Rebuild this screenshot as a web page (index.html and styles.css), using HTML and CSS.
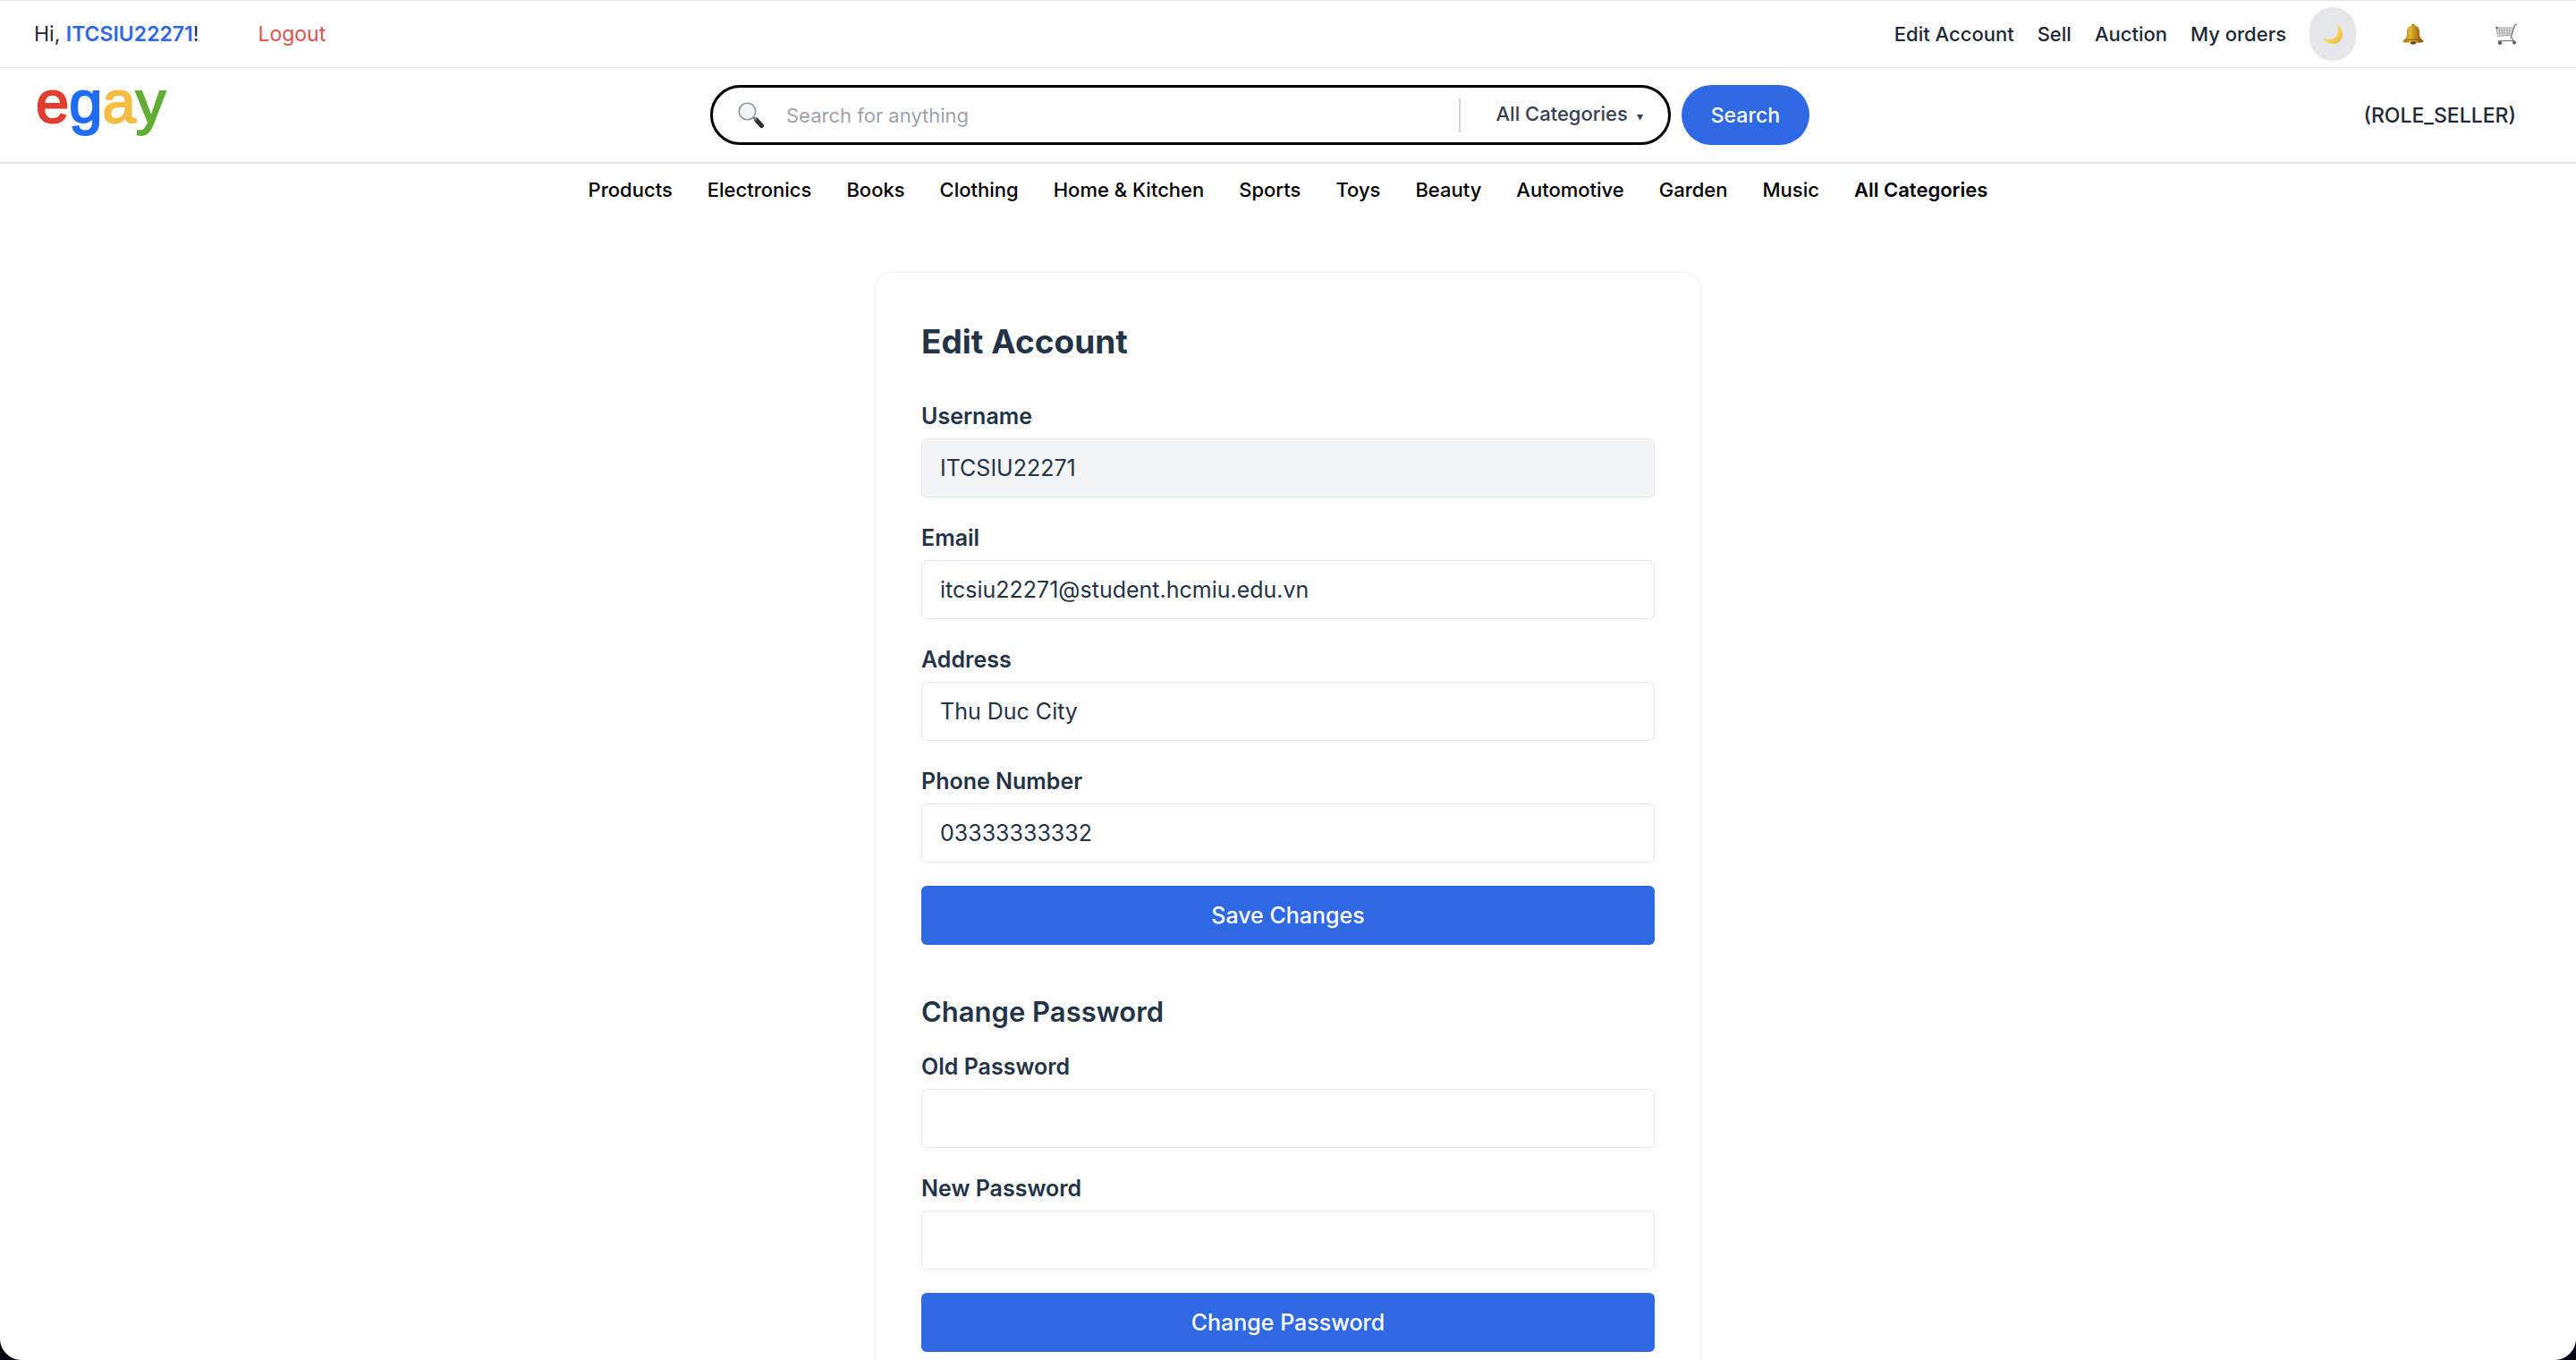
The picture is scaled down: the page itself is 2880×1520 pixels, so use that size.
FILE: index.html
```html
<!DOCTYPE html>
<html lang="en">
<head>
<meta charset="utf-8">
<title>Edit Account</title>
<link rel="stylesheet" href="styles.css">
</head>
<body>
<header>
  <div class="topbar">
    <div class="greeting">
      <span>Hi, <strong class="user">ITCSIU22271</strong>!</span>
      <button class="logout" type="button">Logout</button>
    </div>
    <nav class="account-links" aria-label="Account">
      <a href="#account">Edit Account</a>
      <a href="#sell">Sell</a>
      <a href="#auction">Auction</a>
      <a href="#orders">My orders</a>
      <button class="theme" type="button" aria-label="Toggle dark mode">
        <svg class="icon" viewBox="0 0 24 24" aria-hidden="true">
          <defs><linearGradient id="moon" x1="0" y1="0" x2="1" y2="1"><stop offset="0" stop-color="#fbe58f"/><stop offset=".6" stop-color="#f8d154"/><stop offset="1" stop-color="#e3b23c"/></linearGradient></defs>
          <path d="M16 1C25 6 25 17 18 21.500C12 25 4 22 1 16.500C6 19 12 18.500 15.500 15C19 11 19 5 16 1Z" fill="url(#moon)"/>
        </svg>
      </button>
      <button class="plain bell" type="button" aria-label="Notifications">
        <svg class="icon" viewBox="0 0 24 24" aria-hidden="true">
          <defs><linearGradient id="bell" x1="0" x2="1"><stop offset="0" stop-color="#a87410"/><stop offset=".35" stop-color="#e3b836"/><stop offset=".65" stop-color="#b98316"/><stop offset="1" stop-color="#7d520b"/></linearGradient></defs>
          <circle cx="12" cy="2.600" r="1.900" fill="#a06d12"/>
          <path d="M12 2.500C16.500 2.500 19 5 19 9.500C19 14.500 19.500 17 23.500 19.500Q23.500 21.500 20 21.800H4Q.5 21.500 .5 19.500C4.500 17 5 14.500 5 9.500C5 5 7.500 2.500 12 2.500Z" fill="url(#bell)"/>
          <path d="M3.500 19Q12 17 20.500 19" fill="none" stroke="#80540c"/>
          <ellipse cx="12" cy="22" rx="3" ry="1.700" fill="#70480a"/>
        </svg>
      </button>
      <button class="plain cart" type="button" aria-label="Cart">
        <svg class="icon" viewBox="0 0 24 24" aria-hidden="true" fill="none" stroke="#a3a5a8">
          <path d="M1 5H20L18 13L2.500 14.500Z" fill="#eeeff0"/>
          <path d="M4 5L5 14M7 5L8 14M10 5V14M13 5V13.500M16 5L15 13.500M1.500 8H19M2 11H18.500"/>
          <path d="M23.500 1L21.500 2L17.500 15Q17 16 18.500 17L20 19.500L3 20" stroke="#77797c" stroke-width="1.300"/>
          <circle cx="5" cy="22" r="1.600" fill="#55575a" stroke="#55575a"/><circle cx="21" cy="21.500" r="1.600" fill="#55575a" stroke="#55575a"/>
          <circle cx="1.500" cy="5" r=".8" fill="#40566e" stroke="#40566e"/>
        </svg>
      </button>
    </nav>
  </div>
  <div class="mainbar">
    <a class="logo" href="#home" aria-label="egay"><span class="red">e</span><span class="blue">g</span><span class="gold">a</span><span class="green">y</span></a>
    <form class="search" role="search">
      <div class="searchbox">
        <svg class="glass" viewBox="0 0 30 30" aria-hidden="true">
          <path d="M20.500 20L26.500 26.500" stroke="#2b2d30" stroke-width="5" stroke-linecap="round"/>
          <path d="M17 17L20.500 20.500" stroke="#777b80" stroke-width="2.500"/>
          <circle cx="10.500" cy="10.500" r="9.300" fill="#f3f4f5" stroke="#8c949c" stroke-width="1.600"/>
        </svg>
        <input class="query" type="search" placeholder="Search for anything" aria-label="Search for anything">
        <button class="category" type="button">All Categories <span class="caret">▾</span></button>
      </div>
      <button class="go" type="submit">Search</button>
    </form>
    <span class="role">(ROLE_SELLER)</span>
  </div>
</header>
<nav class="categories" aria-label="Categories">
  <a href="#products">Products</a>
  <a href="#electronics">Electronics</a>
  <a href="#books">Books</a>
  <a href="#clothing">Clothing</a>
  <a href="#home-kitchen">Home &amp; Kitchen</a>
  <a href="#sports">Sports</a>
  <a href="#toys">Toys</a>
  <a href="#beauty">Beauty</a>
  <a href="#automotive">Automotive</a>
  <a href="#garden">Garden</a>
  <a href="#music">Music</a>
  <a class="all" href="#all">All Categories</a>
</nav>
<main class="card">
  <h1>Edit Account</h1>
  <form class="fields">
    <div class="field"><label for="username">Username</label><input id="username" type="text" value="ITCSIU22271" disabled></div>
    <div class="field"><label for="email">Email</label><input id="email" type="email" value="itcsiu22271@student.hcmiu.edu.vn"></div>
    <div class="field"><label for="address">Address</label><input id="address" type="text" value="Thu Duc City"></div>
    <div class="field"><label for="phone">Phone Number</label><input id="phone" type="tel" value="03333333332"></div>
    <button class="primary" type="submit">Save Changes</button>
  </form>
  <h2>Change Password</h2>
  <form class="fields">
    <div class="field"><label for="old">Old Password</label><input id="old" type="password"></div>
    <div class="field"><label for="new">New Password</label><input id="new" type="password"></div>
    <button class="primary" type="submit">Change Password</button>
  </form>
</main>
<div class="corners" aria-hidden="true"></div>
</body>
</html>
```
FILE: styles.css
```css
*, *::before, *::after { box-sizing: border-box; }
html { background: #fefefe; scrollbar-width: none; }
body {
  margin: 0;
  font-family: Inter, "Liberation Sans", sans-serif;
  font-size: 22px;
  line-height: 32px;
  color: #1f2937;
}
a { color: inherit; text-decoration: none; }
button, input { font: inherit; color: inherit; margin: 0; }
button { border: 0; background: none; padding: 0; cursor: pointer; }

.topbar {
  display: flex;
  align-items: center;
  justify-content: space-between;
  height: 76px;
  padding: 0 66px 0 38px;
  border-top: 1px solid #e5e7eb;
  border-bottom: 1px solid #e5e7eb;
}
.greeting { display: flex; gap: 66px; font-size: 23px; }
.user { font-weight: 600; color: #2f68e3; }
.logout { color: #df524b; }
.account-links { display: flex; align-items: center; gap: 26px; font-weight: 500; }
.icon { display: block; width: 24px; height: 24px; }
.theme { padding: 18px 14px; border-radius: 26px; background: #e5e7eb; }
.bell { margin-left: 26px; }
.cart { margin-left: 54px; }

.mainbar {
  display: grid;
  grid-template-columns: 1fr auto 1fr;
  align-items: center;
  height: 107px;
  padding: 0 67px 0 38px;
  border-bottom: 2px solid #e5e7eb;
}
.logo {
  align-self: start;
  padding: 3px 2px 0;
  font-family: "Liberation Sans", sans-serif;
  font-size: 67px;
  line-height: 70px;
  -webkit-text-stroke-width: 2px;
}
.red { color: #e03e2f; }
.blue { color: #1f6df6; }
.gold { color: #f4bd42; }
.green { color: #62ad33; }
.search { display: flex; gap: 12px; width: 1229px; margin-right: 34px; }
.searchbox {
  flex: 1;
  display: flex;
  align-items: center;
  height: 67px;
  padding: 0 28px;
  border: 3px solid #000;
  border-radius: 34px;
}
.glass { width: 30px; height: 30px; }
.query {
  flex: 1;
  min-width: 0;
  padding: 0 24px;
  border: 0;
  outline: 0;
  background: none;
}
.query::placeholder { color: #9ca3af; }
.category {
  height: 38px;
  padding-left: 40px;
  border-left: 2px solid #d1d5db;
  font-weight: 500;
  color: #374151;
}
.caret { margin-left: 4px; font-size: 14px; }
.go {
  padding: 0 33px;
  border-radius: 34px;
  background: #2f68e3;
  color: #fff;
  font-size: 23px;
  font-weight: 500;
}
.role { justify-self: end; font-size: 23px; font-weight: 500; }

.categories {
  display: flex;
  justify-content: center;
  gap: 39px;
  padding: 13px 0;
  font-weight: 500;
  color: #000;
}
.all { font-weight: 600; }

.card {
  max-width: 922px;
  margin: 64px auto;
  padding: 51px;
  border-radius: 20px;
  box-shadow: 0 0 5px rgba(0, 0, 0, 0.08);
  font-size: 25px;
  line-height: 38px;
  color: #243447;
}
h1 { margin: 0 0 38px; font-size: 37px; line-height: 52px; font-weight: 700; }
h2 { margin: 52px 0 20px; font-size: 31px; line-height: 45px; font-weight: 600; }
.fields { display: grid; gap: 26px; }
.field { display: grid; gap: 6px; }
label { font-weight: 600; }
.field input {
  width: 100%;
  height: 66px;
  padding: 0 20px;
  border: 1px solid #e5e7eb;
  border-radius: 6px;
  background: none;
}
.field input:disabled { background: #f3f4f6; }
.primary { height: 66px; border-radius: 6px; background: #2f68e3; color: #fff; font-weight: 500; }

/* dark rounded bottom corners of the window */
.corners {
  position: fixed;
  inset: 0;
  border-radius: 0 0 24px 24px;
  box-shadow: 0 0 0 24px #050312;
  pointer-events: none;
}
```
